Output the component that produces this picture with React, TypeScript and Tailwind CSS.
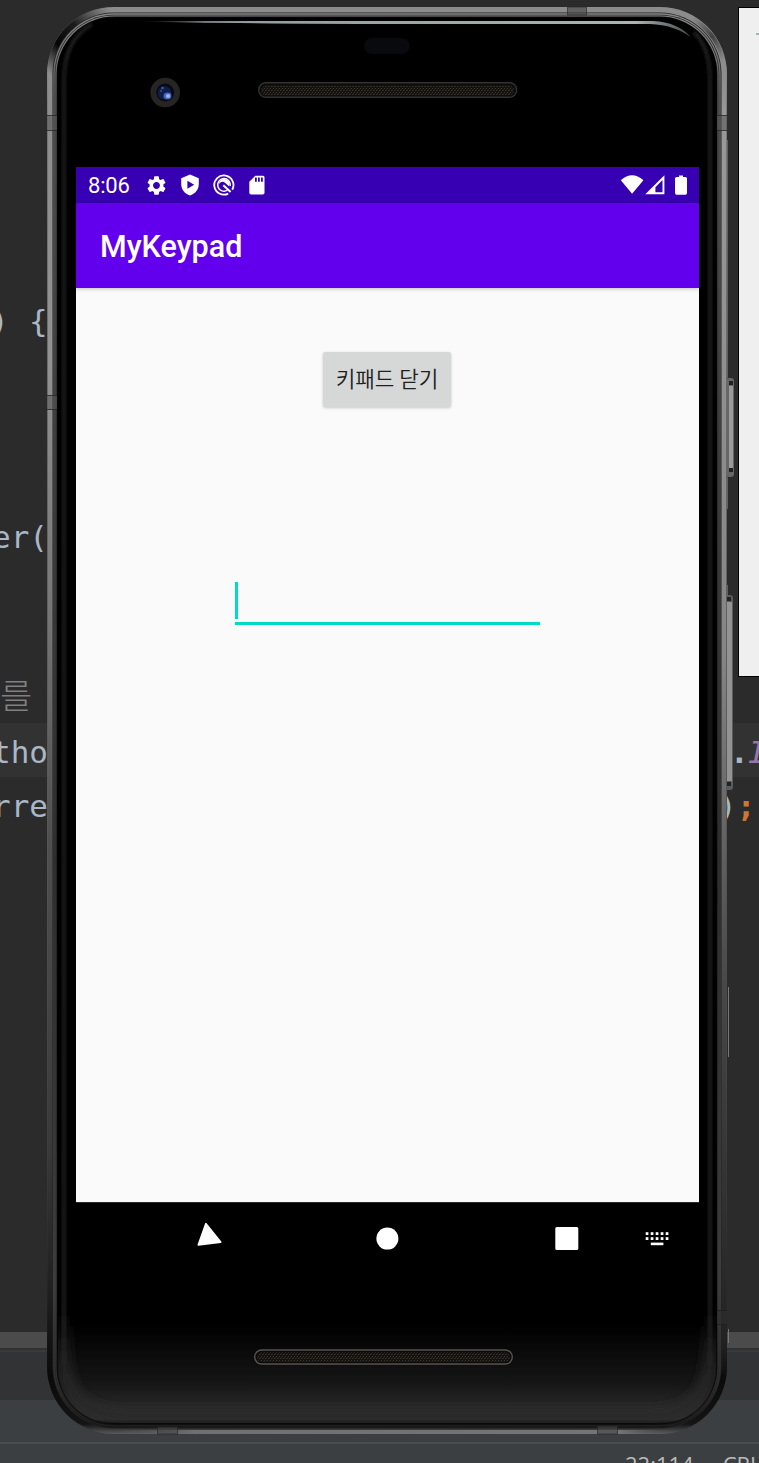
import React from 'react';
import { MdSettings } from 'react-icons/md';

function Code({ className, children }: { className: string; children?: React.ReactNode }) {
  return <div className={`flex h-[54px] shrink-0 items-center whitespace-pre ${className}`}>{children}</div>;
}

function Editor() {
  return (
    <div
      className={
        "flex h-[1463px] w-[759px] flex-col overflow-hidden bg-[#2b2b2b] pt-[291px] font-['DejaVu_Sans_Mono','Noto_Sans_CJK_KR',monospace] text-[31px] leading-[54px] text-[#a9b7c6]"
      }
    >
      <Code className="pl-[29px] pt-[6px]"><span className="-ml-[39px] w-[39px] shrink-0">)</span>{'{'}</Code>
      <div className="h-[162px] shrink-0" />
      <Code className="-ml-[8px] pt-[5px]">er(</Code>
      <div className="h-[108px] shrink-0" />
      <Code className="pt-[2px] text-[35px] font-light text-[#808080]">를</Code>
      <Code className="-ml-[8px] bg-[#323232] pt-[3px]">
        <span className="w-[738px] shrink-0">tho</span>
        <span className="w-[18px] shrink-0 font-bold">.</span>
        <span className="italic text-[#9876aa]">I</span>
      </Code>
      <Code className="-ml-[8px] pt-[3px]">
        <span className="w-[726px] shrink-0">rre</span>
        <span>)</span>
        <span className="font-bold text-[#cc7832]">;</span>
      </Code>
      <div className="h-[501px] shrink-0" />
      <div className="h-4 shrink-0 bg-[#4b4b4b]" />
      <div className="h-0.5 shrink-0 bg-[#2f3031]" />
      <div className="h-[50px] shrink-0 border-t-2 border-[#393a3b] bg-[#313335]" />
      <div className="h-[42px] shrink-0 bg-[#3c3f41]" />
      <div className="flex h-[21px] shrink-0 items-start gap-[29px] overflow-hidden border-t-2 border-[#4b4b4b] bg-[#3c3f41] pl-[625px] pt-[6px] font-['Open_Sans',sans-serif] text-[22px] leading-[28px] text-[#bbbbbb]">
        <span>22:114</span>
        <span>CRLF</span>
      </div>
    </div>
  );
}

/* Phone body: concentric metal edges, side keys and glass reflections. */
function Shell() {
  const ring = (i: number, fill: string) => (
    <rect x={47 + i} y={7 + i} width={680 - 2 * i} height={1427 - 2 * i} rx={67 - i} fill={fill} />
  );
  return (
    <svg className="absolute inset-0" width="759" height="1463" viewBox="0 0 759 1463">
      <defs>
        <linearGradient id="metal" x1="0" y1="0" x2="0" y2="1">
          <stop offset="0" stopColor="#8c8c8c" />
          <stop offset=".25" stopColor="#929292" />
          <stop offset=".42" stopColor="#777" />
          <stop offset=".58" stopColor="#505050" />
          <stop offset=".8" stopColor="#393939" />
          <stop offset=".9" stopColor="#202020" />
          <stop offset=".96" stopColor="#0a0a0a" />
          <stop offset=".993" stopColor="#141414" />
          <stop offset="1" stopColor="#5a5a5a" />
        </linearGradient>
        <linearGradient id="innerMetal" x1="0" y1="0" x2="0" y2="1">
          <stop offset="0" stopColor="#858585" />
          <stop offset=".06" stopColor="#606060" />
          <stop offset=".3" stopColor="#4a4a4a" />
          <stop offset=".6" stopColor="#333" />
          <stop offset=".9" stopColor="#484848" />
          <stop offset=".97" stopColor="#2c2c2c" />
          <stop offset="1" stopColor="#161616" />
        </linearGradient>
        <linearGradient id="rightEdge" gradientUnits="userSpaceOnUse" x1="0" y1="60" x2="0" y2="1380">
          <stop offset="0" stopColor="#8c8c8c" stopOpacity="0" />
          <stop offset=".04" stopColor="#999" />
          <stop offset=".45" stopColor="#858585" />
          <stop offset=".7" stopColor="#484848" />
          <stop offset=".97" stopColor="#222" />
          <stop offset="1" stopColor="#222" stopOpacity="0" />
        </linearGradient>
        <linearGradient id="edgeLine" gradientUnits="userSpaceOnUse" x1="0" y1="60" x2="0" y2="1370">
          <stop offset="0" stopColor="#777" stopOpacity="0" />
          <stop offset=".05" stopColor="#777" />
          <stop offset=".6" stopColor="#555" />
          <stop offset="1" stopColor="#333" stopOpacity="0" />
        </linearGradient>
        <linearGradient id="glass" x1="0" y1="0" x2="0" y2="1">
          <stop offset="0" stopColor="#000" />
          <stop offset=".93" stopColor="#000" />
          <stop offset=".972" stopColor="#161616" />
          <stop offset=".99" stopColor="#2a2a2a" />
          <stop offset=".997" stopColor="#2c2c2c" />
          <stop offset="1" stopColor="#0c0c0c" />
        </linearGradient>
        <linearGradient id="lowerGlow" gradientUnits="userSpaceOnUse" x1="0" y1="1310" x2="0" y2="1424">
          <stop offset="0" stopColor="#2a2a2a" stopOpacity="0" />
          <stop offset=".6" stopColor="#2a2a2a" />
          <stop offset="1" stopColor="#2c2c2c" />
        </linearGradient>
        <linearGradient id="glare">
          <stop offset="0" stopColor="#8e9a9b" stopOpacity="0" />
          <stop offset=".12" stopColor="#8e9a9b" />
          <stop offset=".9" stopColor="#a9b4b4" />
          <stop offset="1" stopColor="#8e9a9b" stopOpacity=".5" />
        </linearGradient>
        <linearGradient id="cornerTop" gradientUnits="userSpaceOnUse" x1="48" y1="72" x2="110" y2="10">
          <stop offset="0" stopColor="#050505" stopOpacity="0" />
          <stop offset=".3" stopColor="#050505" />
          <stop offset=".6" stopColor="#111" stopOpacity=".9" />
          <stop offset="1" stopColor="#222" stopOpacity="0" />
        </linearGradient>
        <linearGradient id="cornerTopRight" gradientUnits="userSpaceOnUse" x1="690" y1="20" x2="722" y2="62">
          <stop offset="0" stopColor="#222" stopOpacity="0" />
          <stop offset=".5" stopColor="#222" stopOpacity=".7" />
          <stop offset="1" stopColor="#222" stopOpacity="0" />
        </linearGradient>
        <linearGradient id="bottomEdge">
          <stop offset="0" stopColor="#555" stopOpacity="0" />
          <stop offset=".15" stopColor="#707070" />
          <stop offset=".9" stopColor="#757575" />
          <stop offset="1" stopColor="#555" stopOpacity="0" />
        </linearGradient>
        <clipPath id="body"><rect x="47" y="7" width="680" height="1427" rx="67" /></clipPath>
        <filter id="soft" x="-5%" y="-5%" width="110%" height="110%"><feGaussianBlur stdDeviation="1.8" /></filter>
        <filter id="wide" x="-5%" y="-25%" width="110%" height="150%"><feGaussianBlur stdDeviation="6" /></filter>
        <clipPath id="glassClip"><rect x="58" y="18" width="658" height="1405" rx="56" /></clipPath>
        <pattern id="mesh" width="3" height="4" patternUnits="userSpaceOnUse">
          <rect width="3" height="4" fill="#14120f" />
          <rect width="1" height="1" fill="#3c372f" /><rect x="1" y="2" width="1" height="1" fill="#383329" />
          <rect x="2" y="1" width="1" height="2" fill="#25221d" />
        </pattern>
      </defs>

      {/* side keys */}
      <rect x="726" y="378" width="8" height="99" rx="3" fill="#666" />
      <rect x="729" y="386" width="4" height="83" fill="#9a9a9a" />
      <rect x="729" y="381" width="4" height="4" fill="#222" /><rect x="729" y="468" width="4" height="4" fill="#222" />
      <rect x="724" y="595" width="9" height="195" rx="3" fill="#5c5c5c" />
      <rect x="727" y="602" width="5" height="179" fill="#939393" />
      <rect x="727" y="597" width="4" height="4" fill="#222" /><rect x="727" y="782" width="4" height="4" fill="#222" />
      <path d="M727.5 140V378M727.5 477V509M727.5 585V596" stroke="#606060" />
      <path d="M728.5 987V1057M728.5 1329V1343" stroke="#777" />

      {ring(0, 'url(#metal)')}
      <g clipPath="url(#body)">
        <path d="M49.5 76A65 65 0 0 1 114 9.5" fill="none" stroke="url(#cornerTop)" strokeWidth="7" />
        <path d="M660 9.5A65 65 0 0 1 724.5 76" fill="none" stroke="url(#cornerTopRight)" strokeWidth="4" />
        <path d="M723.6 60V1380h.8V60" fill="none" stroke="url(#rightEdge)" strokeWidth="5" />
        <path d="M47 60h1V1370h-1ZM726 60h1V1370h-1Z" fill="url(#edgeLine)" />
        <rect x="110" y="1430" width="565" height="4" fill="url(#bottomEdge)" />
      </g>
      {ring(5.5, '#222')}
      {ring(6.3, 'url(#innerMetal)')}
      {ring(7.7, '#252525')}
      {ring(8.4, 'url(#innerMetal)')}
      {ring(9.6, '#090909')}
      {ring(10.4, 'url(#glass)')}
      <path d="M64 1365V80Q64 40 92 24M710 1365V80Q710 48 694 32" fill="none" stroke="#1d1d1d" strokeWidth="4" filter="url(#soft)" />
      <g clipPath="url(#glassClip)">
        <path d="M64 1310V1360Q66 1416 126 1416H648Q708 1416 710 1360V1310" fill="none" stroke="url(#lowerGlow)" strokeWidth="12" filter="url(#wide)" />
      </g>

      {/* antenna bands */}
      {[[47, 115, 10, 16], [47, 395, 10, 15], [717, 115, 10, 16], [717, 1310, 10, 15]].map(([x, y, w, h]) => (
        <g key={`${x}-${y}`}>
          <rect x={x} y={y} width={w} height={h} fill={y > 1000 ? '#303030' : '#555'} fillOpacity=".55" />
          <path d={`M${x} ${y + 0.5}h${w}M${x} ${y + h - 0.5}h${w}`} stroke="#1a1a1a" strokeOpacity=".65" />
        </g>
      ))}
      {[[567, 7, 20, 8], [157, 1427, 21, 7], [597, 1426, 21, 8]].map(([x, y, w, h]) => (
        <rect key={x} x={x + 0.5} y={y} width={w - 1} height={h} fill="#444" fillOpacity=".6" stroke="#222" strokeOpacity=".6" />
      ))}

      <path d="M138 21.5Q250 20.8 400 21H653Q678 22 691 37.5Q675 25 650 24H400Q230 23.5 138 21.5Z" fill="url(#glare)" />
      <rect x="364" y="38" width="45.5" height="16" rx="8" fill="#090a0e" />

      {/* front camera */}
      <circle cx="165.2" cy="92.5" r="14.8" fill="#272424" />
      <circle cx="165.2" cy="92.5" r="9" fill="#080b17" />
      <circle cx="164.5" cy="93" r="6.8" fill="#111d49" />
      <ellipse cx="167.5" cy="96" rx="4" ry="3.4" fill="#4565bd" />
      <circle cx="168" cy="96" r="2.1" fill="#9eb4f2" />
      <circle cx="162.5" cy="88" r="1.3" fill="#405ca6" /><circle cx="161" cy="91" r="1" fill="#344f9f" />

      {/* speakers */}
      <rect x="258.7" y="82.7" width="258" height="14.6" rx="7.3" fill="#0b0b0b" stroke="#343230" strokeWidth="1.4" />
      <rect x="261" y="85.5" width="253" height="10" rx="5" fill="url(#mesh)" />
      <rect x="254.7" y="1350" width="257.6" height="14" rx="7" fill="#0b0b0b" stroke="#57544f" strokeWidth="1.4" />
      <rect x="257" y="1352.5" width="253" height="9.5" rx="4.7" fill="url(#mesh)" />
    </svg>
  );
}

function StatusBar() {
  return (
    <div className="flex h-9 items-center bg-[#3700b3] pl-3 pr-[10px] text-white">
      <span className="w-[57px] pt-[2px] text-[22px] leading-9 tracking-[-0.2px]">8:06</span>
      <MdSettings size={23} className="mr-[12px]" />
      <svg width="20" height="22" viewBox="0 0 20 22" className="mr-[13px]">
        <path fill="currentColor" fillRule="evenodd" d="M10 .6 18.8 4.2V10C18.8 15.5 15 20 10 21.4 5 20 1.2 15.5 1.2 10V4.2ZM7.4 6.8V14.8L14.2 10.8Z" />
      </svg>
      <svg width="22" height="22" viewBox="0 0 22 22" fill="none" stroke="currentColor" className="mr-[14px]">
        <path d="M15.2 19.6A9.6 9.6 0 1 1 19.2 15.8" strokeWidth="1.8" />
        <path d="M14.4 16.2A6.3 6.3 0 1 1 17.2 12" strokeWidth="1.5" />
        <path d="M5.8 10.2A5.3 5.3 0 0 1 16.4 10.5L16.2 12.6 12.3 8.9C10 6.9 7.3 7.6 5.8 10.2Z" fill="currentColor" stroke="none" />
        <path d="M10.3 11.2 17.6 18" strokeWidth="2" />
      </svg>
      <svg width="16" height="20" viewBox="0 0 16 20">
        <path fill="currentColor" fillRule="evenodd" d="M6.3.8H14Q15.5.8 15.5 2.3V17.7Q15.5 19.4 13.8 19.4H2Q.3 19.4.3 17.7V6.8ZM6 2.6V6.7H7.8V2.6ZM9 2.6V6.7H10.8V2.6ZM12 2.6V6.7H13.8V2.6Z" />
      </svg>
      <svg width="70" height="22" viewBox="0 0 70 22" className="ml-auto" fill="currentColor">
        <path d="M1.8 6.3Q13 -3.6 24.4 6.3L13.1 19.8Z" />
        <path fillRule="evenodd" d="M45.4 1.2V20.2H26.3ZM43.5 6.1 36.4 13.2V18.3H43.5Z" />
        <path d="M60 1.5H64V3H66.5Q68 3 68 4.5V19Q68 20.8 66.5 20.8H57.7Q56 20.8 56 19V4.5Q56 3 57.7 3H60Z" />
      </svg>
    </div>
  );
}

function NavBar() {
  return (
    <div className="flex h-[77px] border-t border-[#29292b] bg-black">
      <svg width="623" height="76" viewBox="0 0 623 76" fill="#fff">
        <path d="M129.5 20.5 122 41.6 144.2 38.8Z" transform="translate(.4 .3)" stroke="#fff" strokeWidth="1.8" strokeLinejoin="round" />
        <circle cx="311.4" cy="35.6" r="11" />
        <rect x="479.3" y="24" width="23" height="23" rx="1.5" />
        {[0, 1, 2, 3, 4].map((i) => (
          <g key={i}>
            <rect x={569.7 + i * 5} y="29.2" width="2.7" height="2.8" />
            <rect x={569.7 + i * 5} y="34.2" width="2.7" height="2.8" />
          </g>
        ))}
        <rect x="574.8" y="39.6" width="12.6" height="2.6" />
      </svg>
    </div>
  );
}

function Screen() {
  return (
    <div className="ml-[76px] mt-[167px] flex w-[623px] flex-col font-['Roboto','Noto_Sans_CJK_KR',sans-serif]">
      <StatusBar />
      <div className="relative flex h-[85px] items-center bg-[#6200ee] pl-6 pt-[3px] text-[30.5px] font-medium text-white shadow-[0_1px_4px_rgba(0,0,0,0.22)]">
        MyKeypad
      </div>
      <div className="flex h-[914px] flex-col items-center bg-[#fafafa] pt-[64px]">
        <button className="mr-px h-[55px] w-[128px] whitespace-nowrap rounded-[2px] bg-[#d6d8d7] pb-[3px] font-['Noto_Sans_CJK_KR',sans-serif] text-[21.3px] font-[350] leading-none text-[#202020] shadow-[0_1px_3px_rgba(0,0,0,0.2)]">
          키패드 닫기
        </button>
        <div className="mt-[175px] flex h-[43px] w-[305px] border-b-[3px] border-[#03dac5]">
          <div className="h-[37px] w-[2.5px] bg-[#03dac5]" />
        </div>
      </div>
      <NavBar />
    </div>
  );
}

export default function App() {
  return (
    <div className="relative h-[1463px] w-[759px] overflow-hidden">
      <Editor />
      <div className="absolute left-[738px] top-[7px] flex h-[670px] w-[30px] border border-black bg-[#efefef] pl-[17px] pt-[25px]">
        <div className="h-0.5 w-3 shrink-0 bg-[#a4b5c0]" />
      </div>
      <div className="absolute inset-0">
        <Shell />
        <div className="relative flex">
          <Screen />
        </div>
      </div>
    </div>
  );
}
